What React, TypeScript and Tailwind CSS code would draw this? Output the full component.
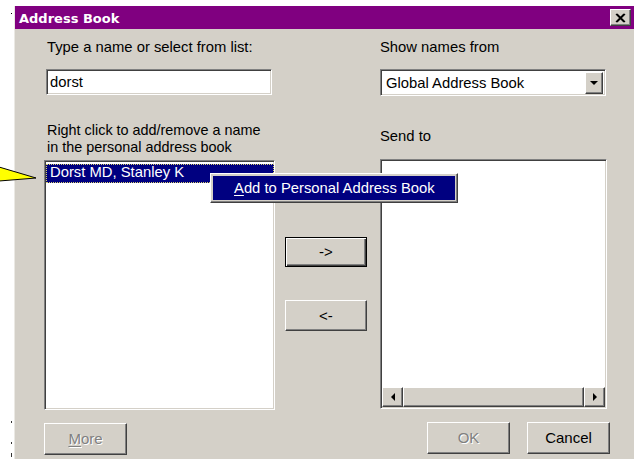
import React from 'react'

// classic 3D frame styles
const raised =
  'border border-t-white border-l-white border-r-[#404040] border-b-[#404040] shadow-[inset_-1px_-1px_0_#808080]'
const defaultBtn =
  'border border-black shadow-[inset_1px_1px_0_#fff,inset_-1px_-1px_0_#404040,inset_-2px_-2px_0_#808080]'
const sunken =
  'border border-t-[#808080] border-l-[#808080] border-r-white border-b-white shadow-[inset_1px_1px_0_#404040,inset_-1px_-1px_0_#d4d0c8]'
const disabledText = 'text-[#808080] [text-shadow:1px_1px_0_#fff]'

function Arrow({ dir }: { dir: 'left' | 'right' | 'down' }) {
  const pts =
    dir === 'left' ? '4,0 4,8 0,4' : dir === 'right' ? '0,0 0,8 4,4' : '0,0 8,0 4,4'
  const w = dir === 'down' ? 8 : 4
  const h = dir === 'down' ? 4 : 8
  return (
    <svg width={w} height={h} viewBox={`0 0 ${w} ${h}`}>
      <polygon points={pts} fill="#000" />
    </svg>
  )
}

function Button({
  children,
  className = '',
  disabled = false,
  isDefault = false,
}: {
  children: React.ReactNode
  className?: string
  disabled?: boolean
  isDefault?: boolean
}) {
  return (
    <div
      className={`flex items-center justify-center bg-[#d4d0c8] text-[15px] leading-[16px] ${
        isDefault ? defaultBtn : raised
      } ${disabled ? disabledText : 'text-black'} ${className}`}
    >
      {children}
    </div>
  )
}

export default function App() {
  return (
    <div className="relative flex w-[634px] h-[459px] overflow-hidden bg-white font-['Liberation_Sans',Arial,sans-serif] text-black">
      {/* stray marks on the page margin */}
      <div className="w-[14px] shrink-0 flex flex-col items-end pr-[2px]">
        <span className="mt-[13px] w-[1px] h-[1px] bg-black" />
        <span className="mt-[407px] w-[1px] h-[2px] bg-[#333]" />
        <span className="mt-[19px] w-[1px] h-[2px] bg-[#333]" />
        <span className="mt-[9px] w-[1px] h-[4px] bg-[#333]" />
      </div>

      <div className="flex-1 flex flex-col pt-[6px]">
        <div className="flex-1 flex flex-col bg-[#d4d0c8] border-l border-l-[#ebe9e4]">
          {/* title bar */}
          <div className="h-[23px] bg-[#800080] flex items-center justify-between pl-[4px] pr-[3px]">
            <span className="text-white font-bold text-[13px] font-['DejaVu_Sans',sans-serif] leading-none mt-[1px]">
              Address Book
            </span>
            <div className={`w-[21px] h-[17px] bg-[#d4d0c8] flex items-center justify-center ${raised}`}>
              <svg width="11" height="10" viewBox="0 0 11 10">
                <path d="M1 1 L9 9 M2 1 L10 9 M9 1 L1 9 M10 1 L2 9" stroke="#000" strokeWidth="1.3" />
              </svg>
            </div>
          </div>

          {/* body */}
          <div className="relative flex-1 flex pl-[29px] text-[14.8px]">
            {/* left column */}
            <div className="w-[231px] flex flex-col">
              <div className="mt-[10px] pl-[3px] leading-[16px]">Type a name or select from list:</div>
              <div className={`mt-[14px] ml-[2px] w-[226px] h-[26px] bg-white pl-[3px] flex items-center leading-[16px] ${sunken}`}>
                dorst
              </div>
              <div className="mt-[27px] pl-[3px] leading-[17px] text-[14.4px]">
                Right click to add/remove a name
                <br />
                in the personal address book
              </div>
              <div className={`mt-[4px] h-[250px] bg-white pl-[1px] pt-[3px] ${sunken}`}>
                <div className="h-[19px] bg-[#000080] text-white pl-[4px] leading-[17px] outline outline-1 outline-dotted outline-[#d8d070] -outline-offset-1">
                  Dorst MD, Stanley K
                </div>
              </div>
              <Button disabled className="mt-[13px] w-[83px] h-[32px]">
                <span>
                  <u className="underline-offset-2">M</u>ore
                </span>
              </Button>
            </div>

            {/* middle column */}
            <div className="ml-[10px] w-[82px] flex flex-col pt-[208px]">
              <Button isDefault className="h-[30px]">-&gt;</Button>
              <Button className="mt-[33px] h-[31px]">&lt;-</Button>
            </div>

            {/* right column */}
            <div className="ml-[13px] w-[230px] flex flex-col">
              <div className="mt-[10px] leading-[16px]">Show names from</div>
              <div className={`mt-[14px] w-[226px] h-[27px] bg-white flex items-center ${sunken}`}>
                <span className="flex-1 pl-[5px] leading-[16px]">Global Address Book</span>
                <div className={`w-[18px] h-[22px] mr-[2px] bg-[#d4d0c8] flex items-center justify-center ${raised}`}>
                  <Arrow dir="down" />
                </div>
              </div>
              <div className="mt-[32px] leading-[16px]">Send to</div>
              <div className={`mt-[15px] w-[227px] h-[250px] bg-white flex flex-col p-[1px] ${sunken}`}>
                <div className="flex-1" />
                <div className="h-[20px] flex">
                  <div className={`w-[21px] bg-[#d4d0c8] flex items-center justify-center ${raised}`}>
                    <Arrow dir="left" />
                  </div>
                  <div className={`flex-1 bg-[#d4d0c8] ${raised}`} />
                  <div className={`w-[21px] bg-[#d4d0c8] flex items-center justify-center ${raised}`}>
                    <Arrow dir="right" />
                  </div>
                </div>
              </div>
              <div className="mt-[13px] flex">
                <Button disabled className="ml-[47px] w-[83px] h-[32px]">OK</Button>
                <Button className="ml-[17px] w-[83px] h-[32px]">Cancel</Button>
              </div>
            </div>

            {/* context menu */}
            <div className={`absolute left-[195px] top-[144px] w-[248px] h-[30px] bg-[#d4d0c8] p-[2px] ${raised}`}>
              <div className="h-full bg-[#000080] text-white flex items-center pl-[21px] leading-[16px]">
                <span>
                  <u className="underline-offset-2">A</u>dd to Personal Address Book
                </span>
              </div>
            </div>
          </div>
        </div>
      </div>

      {/* callout pointer */}
      <svg className="absolute left-0 top-[160px]" width="40" height="26" viewBox="0 0 40 26">
        <polygon points="-1,7 36,18 -1,21" fill="#ffff00" stroke="#000" strokeWidth="1" />
      </svg>
    </div>
  )
}
